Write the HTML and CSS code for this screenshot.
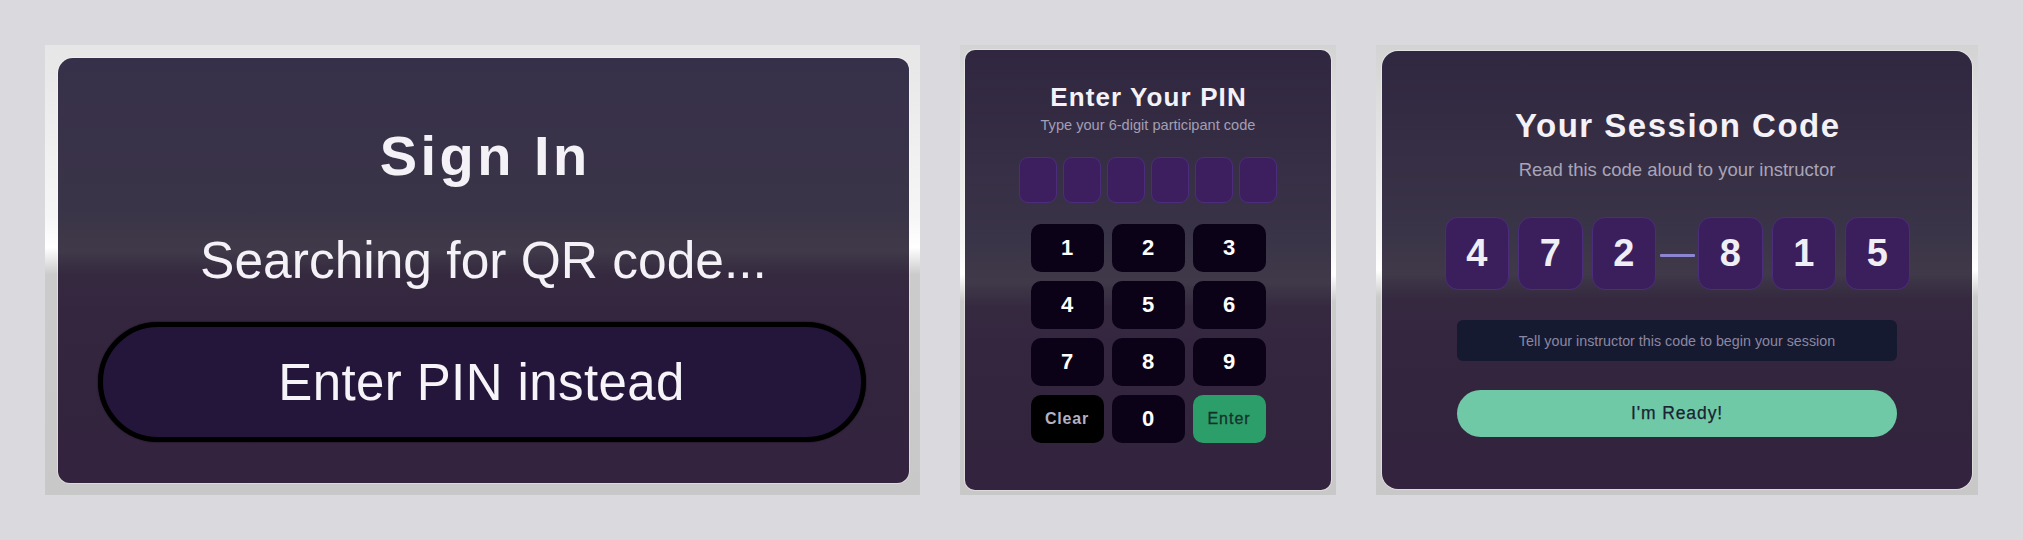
FILE: index.html
```html
<!DOCTYPE html>
<html lang="en">
<head>
<meta charset="utf-8">
<title>Sign in screens</title>
<link rel="stylesheet" href="styles.css">
</head>
<body>
  <section class="frame frame-signin">
    <div class="card card-signin">
      <h1 class="signin-title">Sign In</h1>
      <p class="signin-status">Searching for QR code...</p>
      <button class="pin-link">Enter PIN instead</button>
    </div>
  </section>

  <section class="frame frame-pin">
    <div class="card card-pin">
      <h2 class="pin-title">Enter Your PIN</h2>
      <p class="pin-sub">Type your 6-digit participant code</p>
      <div class="pin-slots">
        <span class="slot"></span><span class="slot"></span><span class="slot"></span>
        <span class="slot"></span><span class="slot"></span><span class="slot"></span>
      </div>
      <div class="keypad">
        <button class="key">1</button>
        <button class="key">2</button>
        <button class="key">3</button>
        <button class="key">4</button>
        <button class="key">5</button>
        <button class="key">6</button>
        <button class="key">7</button>
        <button class="key">8</button>
        <button class="key">9</button>
        <button class="key key-clear">Clear</button>
        <button class="key">0</button>
        <button class="key key-enter">Enter</button>
      </div>
    </div>
  </section>

  <section class="frame frame-session">
    <div class="card card-session">
      <h2 class="session-title">Your Session Code</h2>
      <p class="session-sub">Read this code aloud to your instructor</p>
      <div class="code-row">
        <div class="code-group">
          <span class="digit">4</span><span class="digit">7</span><span class="digit">2</span>
        </div>
        <span class="code-dash"></span>
        <div class="code-group">
          <span class="digit">8</span><span class="digit">1</span><span class="digit">5</span>
        </div>
      </div>
      <div class="info-box">Tell your instructor this code to begin your session</div>
      <button class="ready-btn">I'm Ready!</button>
    </div>
  </section>
</body>
</html>
```

FILE: styles.css
```css
* { box-sizing: border-box; }

body {
  margin: 0;
  padding: 45px;
  background: #d9d9de;
  display: flex;
  align-items: flex-start;
  gap: 40px;
  font-family: "Liberation Sans", Arial, sans-serif;
}

h1, h2, p { margin: 0; }

button {
  font-family: inherit;
  border: none;
  padding: 0;
  cursor: pointer;
}

/* ---------- frames ---------- */
.frame {
  height: 450px;
  display: flex;
  background: linear-gradient(180deg,
    var(--f-top) 0%,
    #f6f6f6 calc(var(--fsplit) - 10%),
    #ffffff calc(var(--fsplit) - 3%),
    #cbcbcb calc(var(--fsplit) + 3%),
    #c8c8c8 100%);
}

.frame-signin {
  --f-top: #e6e6e6;
  --fsplit: 48%;
  width: 875px;
  padding: 13px 11px 12px 13px;
}

.frame-pin {
  --f-top: #d3d3d3;
  --fsplit: 54%;
  width: 376px;
  padding: 5px;
}

.frame-session {
  --f-top: #d3d3d3;
  --fsplit: 53%;
  width: 602px;
  padding: 6px;
}

/* ---------- cards ---------- */
.card {
  flex: 1;
  display: flex;
  flex-direction: column;
  align-items: center;
  color: #f4f2f7;
  background: linear-gradient(180deg,
    var(--c-top) 0%,
    #3a3448 calc(var(--split) - 14%),
    #3f3949 calc(var(--split) - 4%),
    #35293f calc(var(--split) + 1.5%),
    #34263f calc(var(--split) + 10%),
    #33233e 100%);
  box-shadow: 0 0 0 1px rgba(255, 255, 255, 0.35);
}

/* ---------- sign in ---------- */
.card-signin {
  --c-top: #37304a;
  --split: 49.5%;
  border-radius: 15px 12px 12px 12px;
  padding-top: 70px;
}

.signin-title {
  font-size: 56px;
  line-height: 56px;
  font-weight: 700;
  letter-spacing: 3.5px;
  padding-left: 3.5px;
}

.signin-status {
  margin-top: 51px;
  font-size: 51.5px;
  line-height: 51px;
}

.pin-link {
  margin-top: 36px;
  margin-right: 4px;
  width: 768px;
  height: 120px;
  border: 5px solid #000;
  border-radius: 60px;
  background: #24153a;
  box-shadow: 0 0 1.5px #000;
  color: #f6f4f8;
  font-size: 51px;
  letter-spacing: 0.4px;
  display: flex;
  align-items: center;
  justify-content: center;
}

/* ---------- pin ---------- */
.card-pin {
  --c-top: #302640;
  --split: 57%;
  border-radius: 10px;
  padding-top: 34px;
}

.pin-title {
  font-size: 26px;
  line-height: 26px;
  font-weight: 700;
  letter-spacing: 1.1px;
  padding-left: 1.1px;
}

.pin-sub {
  margin-top: 8px;
  font-size: 14.6px;
  line-height: 15px;
  color: #a39fb3;
}

.pin-slots {
  margin-top: 24px;
  display: flex;
  gap: 6px;
}

.slot {
  width: 38px;
  height: 46px;
  border-radius: 9px;
  background: #3d1f60;
  border: 1.5px solid #4c2d7d;
}

.keypad {
  margin-top: 21px;
  display: grid;
  grid-template-columns: repeat(3, 73px);
  grid-auto-rows: 48px;
  column-gap: 8px;
  row-gap: 9px;
}

.key {
  border-radius: 10px;
  background: #0b0218;
  color: #ffffff;
  font-size: 22px;
  font-weight: 700;
  display: flex;
  align-items: center;
  justify-content: center;
}

.key-clear {
  background: #000000;
  color: #b5b1c3;
  font-size: 16px;
  letter-spacing: 0.8px;
}

.key-enter {
  background: #2c9e6a;
  color: #16302a;
  font-size: 16px;
  font-weight: 400;
  letter-spacing: 1px;
  -webkit-text-stroke: 0.3px #16302a;
}

/* ---------- session ---------- */
.card-session {
  --c-top: #302740;
  --split: 55%;
  border-radius: 16px;
  padding-top: 58px;
}

.session-title {
  font-size: 33px;
  line-height: 33px;
  font-weight: 700;
  letter-spacing: 1.5px;
  padding-left: 1.5px;
}

.session-sub {
  margin-top: 18px;
  font-size: 18.5px;
  line-height: 19px;
  color: #a9a4b9;
}

.code-row {
  margin-top: 37.5px;
  display: flex;
  align-items: center;
}

.code-group {
  display: flex;
  gap: 9px;
}

.digit {
  width: 64.5px;
  height: 73px;
  border-radius: 13px;
  background: #3b1f5d;
  border: 1.5px solid #4b2d7b;
  color: #f0eef5;
  font-size: 38px;
  font-weight: 700;
  display: flex;
  align-items: center;
  justify-content: center;
}

.code-dash {
  width: 35px;
  height: 3px;
  margin: 4px 3.5px 0;
  background: #8c85d4;
  border-radius: 1px;
}

.info-box {
  margin-top: 30.5px;
  width: 440px;
  height: 41px;
  border-radius: 6px;
  background: #161a30;
  color: #8b87a2;
  font-size: 14.3px;
  display: flex;
  align-items: center;
  justify-content: center;
}

.ready-btn {
  margin-top: 29px;
  width: 440px;
  height: 47px;
  border-radius: 24px;
  background: #70c9a6;
  color: #1a2233;
  font-size: 17.5px;
  letter-spacing: 0.9px;
  -webkit-text-stroke: 0.25px #1a2233;
}
```
